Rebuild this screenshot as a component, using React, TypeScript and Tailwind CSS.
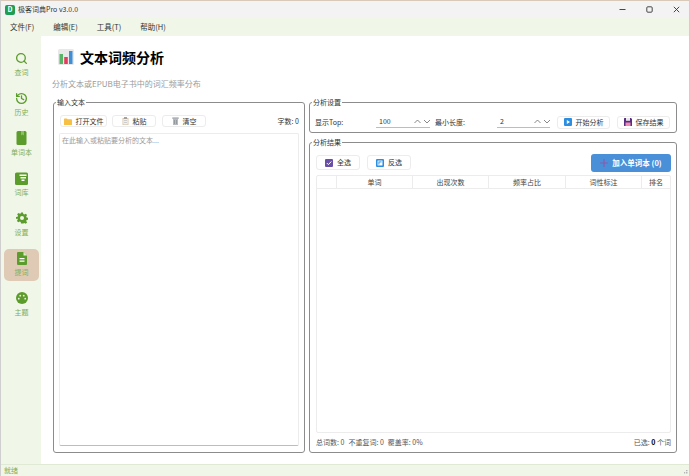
import type { ReactNode } from "react";
import { History, Search } from "lucide-react";

const green = "#5c9c2c";

function BookIcon() {
  return (
    <svg width="11" height="14" viewBox="0 0 11 14">
      <rect x="0.500" y="0" width="10" height="14" rx="1.500" fill={green} />
      <path d="M5 0h3v4.500l-1.500-1-1.500 1z" fill="#8cc063" />
    </svg>
  );
}

function LibraryIcon() {
  return (
    <svg width="13" height="13" viewBox="0 0 13 13">
      <rect x="0" y="0.500" width="13" height="12.500" rx="1.500" fill={green} />
      <path d="M4.500 2.500h7v1.400h-7zM5.500 5h5.500v1.400H5.500zM6.500 7.500h3v1.400h-3z" fill="#fff" />
    </svg>
  );
}

function GearIcon() {
  return (
    <svg width="12" height="12" viewBox="0 0 24 24">
      <path
        fill={green}
        fillRule="evenodd"
        d="M10 1h4l.6 3.200 2 .9 2.800-1.800 2.800 2.800-1.800 2.800.9 2 3.200.6v4l-3.200.6-.9 2 1.800 2.800-2.800 2.800-2.800-1.800-2 .9L14 23h-4l-.6-3.200-2-.9-2.800 1.800-2.800-2.800 1.800-2.800-.9-2L0 14v-4l3.200-.6.9-2L2.300 4.600 5.100 1.800l2.800 1.800 2-.9zM12 8a4 4 0 1 0 0 8 4 4 0 0 0 0-8z"
      />
    </svg>
  );
}

function FileIcon() {
  return (
    <svg width="10" height="13" viewBox="0 0 10 13">
      <path d="M1 0h5.500L10 3.500V12a1 1 0 0 1-1 1H1a1 1 0 0 1-1-1V1a1 1 0 0 1 1-1z" fill={green} />
      <path d="M6.500 0v3.500H10z" fill="#dff0cd" />
      <path d="M2.500 6h5v1.200h-5zM2.500 8.500h5v1.200h-5z" fill="#fff" />
    </svg>
  );
}

function ThemeIcon() {
  return (
    <svg width="12" height="12" viewBox="0 0 13 13">
      <circle cx="6.500" cy="6.500" r="6.500" fill={green} />
      <circle cx="4.600" cy="4" r="1" fill="#e7f2db" />
      <circle cx="8.400" cy="4" r="1" fill="#e7f2db" />
      <circle cx="3" cy="7.200" r="1" fill="#e7f2db" />
      <circle cx="10" cy="7.200" r="1" fill="#e7f2db" />
    </svg>
  );
}

const navItems: { label: string; icon: ReactNode; active?: boolean }[] = [
  { label: "查词", icon: <Search size={13} color={green} strokeWidth={2.4} /> },
  { label: "历史", icon: <History size={13} color={green} strokeWidth={2.4} /> },
  { label: "单词本", icon: <BookIcon /> },
  { label: "词库", icon: <LibraryIcon /> },
  { label: "设置", icon: <GearIcon /> },
  { label: "提词", icon: <FileIcon />, active: true },
  { label: "主题", icon: <ThemeIcon /> },
];

function FolderIcon() {
  return (
    <svg width="8" height="7" viewBox="0 0 8 7">
      <path d="M0 1a.6.6 0 0 1 .6-.6h2.200l.8.9h3.800a.6.600 0 0 1 .6.600v4.500a.6.600 0 0 1-.6.600H.6a.6.600 0 0 1-.6-.600z" fill="#f8bf45" />
    </svg>
  );
}

function ClipIcon() {
  return (
    <svg width="7" height="8" viewBox="0 0 7 8">
      <rect x="0.500" y="1" width="6" height="7" rx="0.500" fill="#d9c6ac" />
      <rect x="1.300" y="2" width="4.400" height="5.300" fill="#f1f1f1" />
      <rect x="2" y="0.200" width="3" height="1.500" fill="#8e8e8e" />
      <path d="M2 3.400h3v.6H2zM2 5h3v.6H2z" fill="#a5a5a5" />
    </svg>
  );
}

function TrashIcon() {
  return (
    <svg width="7" height="8" viewBox="0 0 7 8">
      <rect x="0.300" y="0.500" width="6.400" height="1.200" fill="#8d939a" />
      <path d="M1 2h5v6H1z" fill="#b4bac0" />
      <path d="M2.300 3h.6v4h-.6zM4.100 3h.6v4h-.6z" fill="#7f858b" />
    </svg>
  );
}

function PlayIcon() {
  return (
    <svg width="8" height="8" viewBox="0 0 8 8">
      <rect width="8" height="8" rx="1" fill="#2b8ee0" />
      <path d="M2.800 2v4L6 4z" fill="#fff" />
    </svg>
  );
}

function SaveIcon() {
  return (
    <svg width="8" height="8" viewBox="0 0 8 8">
      <path d="M0 .6A.6.6 0 0 1 .6 0H7l1 1v6.400a.6.600 0 0 1-.6.600H.6A.6.600 0 0 1 0 7.400z" fill="#5a2d82" />
      <rect x="2" y="0" width="4" height="2.800" fill="#e8e8e8" />
      <rect x="1.500" y="4.500" width="5" height="3.500" fill="#f28ab2" />
    </svg>
  );
}

function CheckIcon() {
  return (
    <svg width="8" height="8" viewBox="0 0 8 8">
      <rect width="8" height="8" rx="1" fill="#6a4fa8" />
      <path d="M1.800 4l1.600 1.600 2.900-3.100" stroke="#fff" strokeWidth="1" fill="none" />
    </svg>
  );
}

function InvertIcon() {
  return (
    <svg width="8" height="8" viewBox="0 0 8 8">
      <rect width="8" height="8" rx="1" fill="#2b8ee0" />
      <rect x="2" y="2" width="4" height="4" fill="none" stroke="#fff" strokeWidth="0.900" />
      <rect x="3.400" y="3.400" width="2.600" height="2.600" fill="#fff" />
    </svg>
  );
}

function ChartIcon() {
  return (
    <svg width="16" height="16" viewBox="0 0 16 16">
      <rect width="16" height="16" rx="1.500" fill="#e8e8e8" />
      <rect x="1.500" y="5" width="3.500" height="10" fill="#58b368" />
      <rect x="6.200" y="8" width="3.600" height="7" fill="#e23d5f" />
      <rect x="11" y="2" width="3.500" height="13" fill="#3f8fd8" />
    </svg>
  );
}

function ToolButton({ icon, label, className }: { icon: ReactNode; label: string; className: string }) {
  return (
    <button className={`flex items-center justify-center gap-[4px] rounded-[3px] border border-[#ececec] bg-white text-[7px] text-[#333] ${className}`}>
      {icon}
      <span>{label}</span>
    </button>
  );
}

function Spin({ value, className }: { value: string; className: string }) {
  return (
    <div className={`flex h-[12px] items-center justify-between border-b border-[#bdbdbd] pl-[3px] text-[7px] text-[#333] ${className}`}>
      <span>{value}</span>
      <svg width="16" height="5" viewBox="0 0 16 5" fill="none" stroke="#555" strokeWidth="0.700">
        <path d="M0.500 4L3.500 1l3 3M10 1l3 3 3-3" />
      </svg>
    </div>
  );
}

function Group({ title, className, children }: { title: string; className: string; children: ReactNode }) {
  return (
    <fieldset className={`min-w-0 rounded-[3px] border border-[#8c8c8c] ${className}`}>
      <legend className="ml-[2px] px-[1px] text-[7px] leading-[9px] text-[#333]">{title}</legend>
      {children}
    </fieldset>
  );
}

const columns = ["", "单词", "出现次数", "频率占比", "词性标注", "排名"];

export default function App() {
  return (
    <div className="flex h-[476px] w-[690px] flex-col overflow-hidden border-x border-[#cfcfcf] bg-white font-['Noto_Sans_CJK_SC','Liberation_Sans',sans-serif] text-[#333]">
      <div className="flex h-[18px] shrink-0 items-center border-t border-[#d8c9b8] bg-[#f3f3f3]">
        <div className="ml-[4px] flex h-[10px] w-[10px] items-center justify-center rounded-[2px] bg-[#1f9d55] text-[7px] font-bold text-white">D</div>
        <span className="ml-[3px] text-[7px] text-[#333]">极客词典Pro v3.0.0</span>
        <div className="ml-auto flex items-center gap-[20px] pr-[9px]">
          <svg width="7" height="7" viewBox="0 0 7 7" fill="none" stroke="#333" strokeWidth="0.900">
            <path d="M0.500 3.500h6" />
          </svg>
          <svg width="7" height="7" viewBox="0 0 7 7" fill="none" stroke="#333" strokeWidth="0.900">
            <rect x="0.800" y="0.800" width="5.400" height="5.400" rx="1" />
          </svg>
          <svg width="7" height="7" viewBox="0 0 7 7" fill="none" stroke="#333" strokeWidth="0.900">
            <path d="M0.800 0.800l5.400 5.400M6.200 0.800l-5.400 5.400" />
          </svg>
        </div>
      </div>
      <div className="flex h-[18px] shrink-0 items-center gap-[19px] bg-[#f0f6e8] pl-[9px] text-[7.500px] text-[#333]">
        <span>文件(F)</span>
        <span>编辑(E)</span>
        <span>工具(T)</span>
        <span>帮助(H)</span>
      </div>
      <div className="flex min-h-0 flex-1">
        <aside className="flex w-[40px] shrink-0 flex-col gap-[8px] bg-[#f0f6e8] pl-[3px] pr-[2px] pt-[13px]">
          {navItems.map((item) => (
            <div
              key={item.label}
              className={`flex h-[32px] flex-col items-center rounded-[5px] pt-[2px] ${item.active ? "bg-[#dfcbb5]" : ""}`}
            >
              <div className="flex h-[14px] items-center justify-center">{item.icon}</div>
              <span className="mt-[2.500px] text-[7px] leading-[9px] text-[#7fae58]">{item.label}</span>
            </div>
          ))}
        </aside>
        <main className="flex min-w-0 flex-1 flex-col pl-[12px] pr-[12px]">
          <div className="mt-[11px] flex h-[20px] items-center gap-[6px] pl-[5px]">
            <ChartIcon />
            <h1 className="text-[14px] font-bold text-black">文本词频分析</h1>
          </div>
          <p className="ml-[-1px] mt-[11px] h-[12px] text-[8px] leading-[12px] text-[#9a9a9a]">分析文本或EPUB电子书中的词汇频率分布</p>
          <div className="mt-[8px] flex min-h-0 flex-1 gap-[4px] pb-[11px]">
            <Group title="输入文本" className="flex w-[252px] shrink-0 flex-col">
              <div className="flex h-full flex-col px-[5px] pb-[6px]">
                <div className="mt-[7px] flex h-[14px] items-center">
                  <ToolButton icon={<FolderIcon />} label="打开文件" className="ml-[1px] h-[12px] w-[47px]" />
                  <ToolButton icon={<ClipIcon />} label="粘贴" className="ml-[5px] h-[12px] w-[44px]" />
                  <ToolButton icon={<TrashIcon />} label="清空" className="ml-[6px] h-[12px] w-[44px]" />
                  <span className="ml-auto text-[7px] text-[#333]">字数: 0</span>
                </div>
                <div className="mt-[5px] flex-1 rounded-[2px] border border-[#ececec] border-b-[#bdbdbd] px-[2px] text-[7px] leading-[12px] text-[#9a9a9a]">
                  在此输入或粘贴要分析的文本...
                </div>
              </div>
            </Group>
            <div className="flex min-w-0 flex-1 flex-col gap-[5px]">
              <Group title="分析设置" className="h-[35px] shrink-0">
                <div className="mt-[8px] flex h-[14px] items-center pl-[5px] text-[7px] text-[#333]">
                  <span className="w-[61px]">显示Top:</span>
                  <Spin value="100" className="w-[54px]" />
                  <span className="ml-[5px] w-[62px]">最小长度:</span>
                  <Spin value="2" className="w-[53px]" />
                  <ToolButton icon={<PlayIcon />} label="开始分析" className="ml-[7px] h-[13px] w-[53px]" />
                  <ToolButton icon={<SaveIcon />} label="保存结果" className="ml-[7px] h-[13px] w-[53px]" />
                </div>
              </Group>
              <Group title="分析结果" className="min-h-0 flex-1">
                <div className="flex h-full flex-col pl-[6px] pr-[5px]">
                  <div className="mt-[6px] flex h-[19px] shrink-0 items-center">
                    <ToolButton icon={<CheckIcon />} label="全选" className="h-[15px] w-[44px]" />
                    <ToolButton icon={<InvertIcon />} label="反选" className="ml-[7px] h-[15px] w-[44px]" />
                    <button className="ml-auto flex h-[18px] w-[80px] items-center justify-center gap-[4px] rounded-[3px] bg-[#4a90d9] text-[7.500px] font-bold text-white">
                      <svg width="8" height="8" viewBox="0 0 8 8">
                        <path d="M3.400 0h1.200v3.400H8v1.200H4.600V8H3.400V4.600H0V3.400h3.400z" fill="#8a5bb0" />
                      </svg>
                      <span>加入单词本 (0)</span>
                    </button>
                  </div>
                  <div className="mt-[3px] min-h-0 flex-1 rounded-[2px] border border-[#ececec]">
                    <div className="grid h-[13px] grid-cols-[20px_76px_76px_77px_76px_1fr] border-b border-[#ececec]">
                      {columns.map((col, i) => (
                        <div
                          key={i}
                          className="flex items-center justify-center border-r border-[#ececec] text-[7px] text-[#444] last:border-r-0"
                        >
                          {col}
                        </div>
                      ))}
                    </div>
                  </div>
                  <div className="flex h-[19px] shrink-0 items-center text-[7px] text-[#555]">
                    <span>总词数: 0</span>
                    <span className="ml-[4px]">不重复词: 0</span>
                    <span className="ml-[4px]">覆盖率: 0%</span>
                    <span className="ml-auto">
                      已选: <b className="text-black">0</b> 个词
                    </span>
                  </div>
                </div>
              </Group>
            </div>
          </div>
        </main>
      </div>
      <div className="flex h-[12px] shrink-0 items-center border-t border-[#dfe9d3] bg-[#f0f6e8] pl-[3px] pr-[1px] text-[7px] text-[#7fae58]">
        <span>就绪</span>
        <svg className="ml-auto" width="6" height="6" viewBox="0 0 6 6" fill="#b5b5b5">
          <path d="M4 4h1.500v1.500H4zM2 4h1.200v1.500H2zM4 2h1.500v1.200H4z" />
        </svg>
      </div>
    </div>
  );
}
